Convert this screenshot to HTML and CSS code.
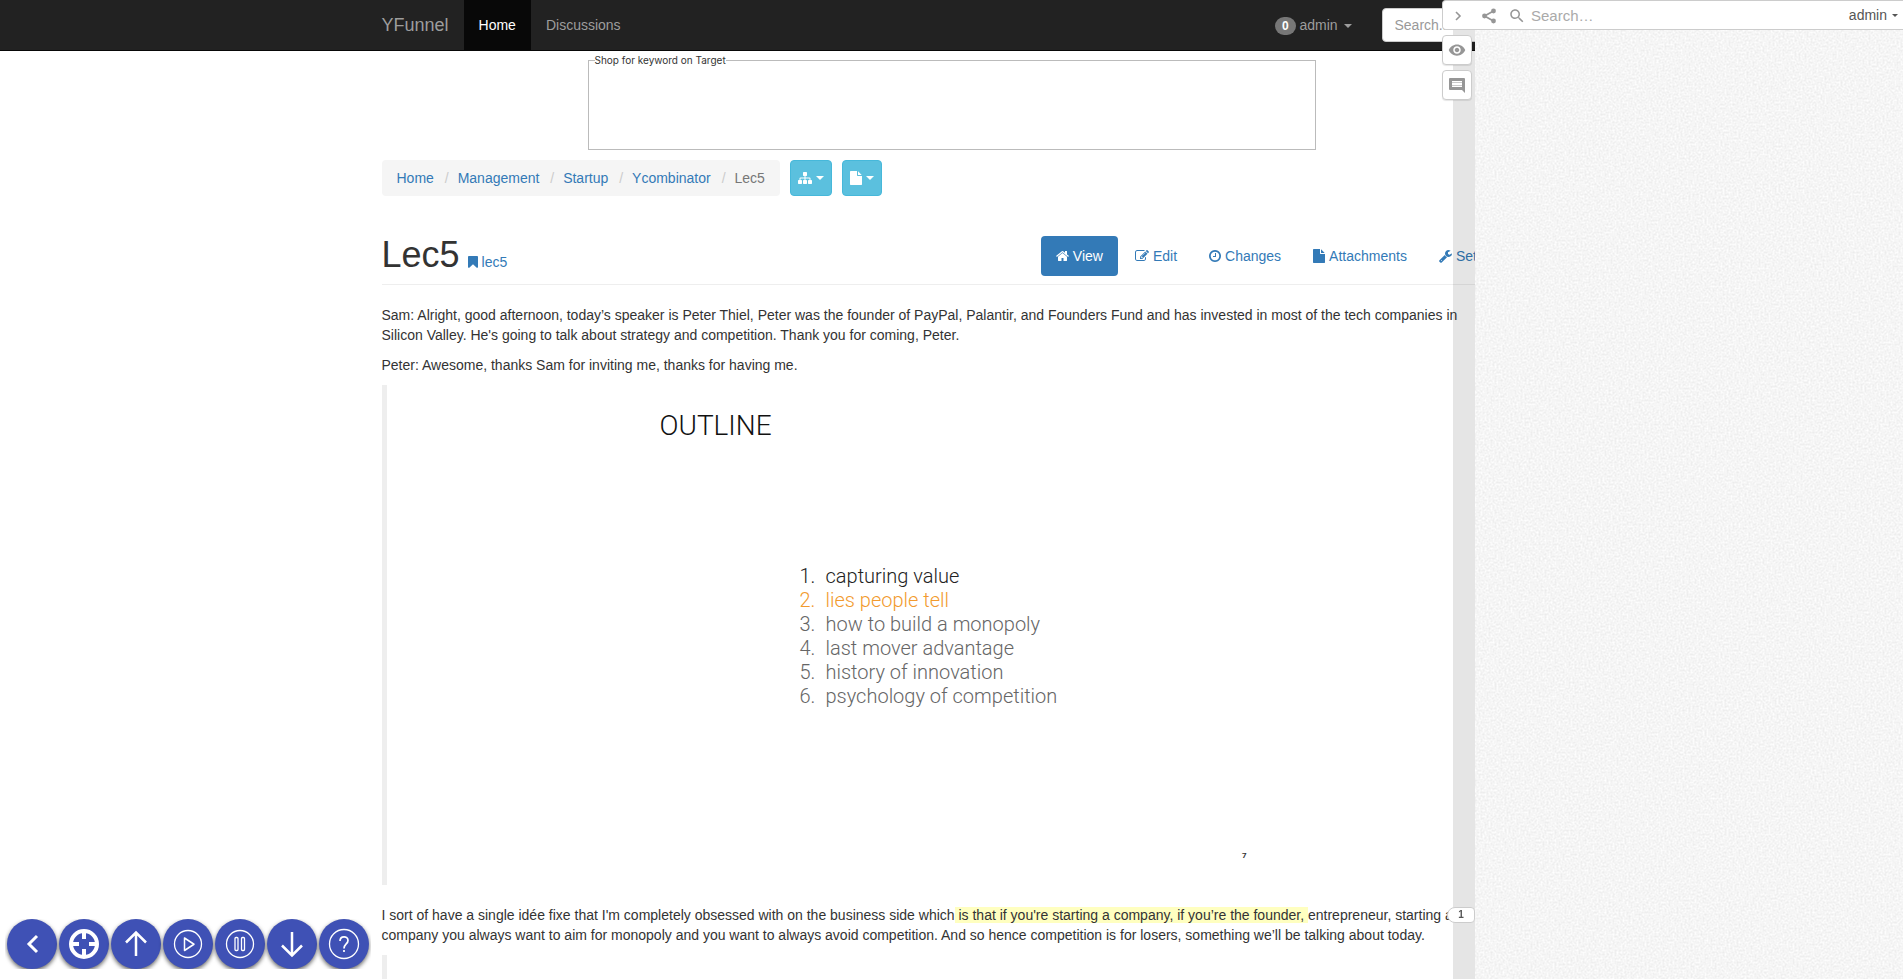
FILE: index.html
```html
<!DOCTYPE html>
<html lang="en">
<head>
<meta charset="utf-8">
<title>Lec5 - YFunnel</title>
<link rel="stylesheet" href="styles.css">
</head>
<body>
<header class="navbar">
  <div class="container navbar-inner">
    <a class="brand" href="#">YFunnel</a>
    <nav class="navbar-links">
      <a class="nav-link active" href="#">Home</a>
      <a class="nav-link" href="#">Discussions</a>
    </nav>
    <a class="nav-link user-link" href="#"><span class="badge">0</span> admin <span class="caret"></span></a>
    <input class="nav-search" type="text" placeholder="Search..." aria-label="Search wiki">
  </div>
</header>

<main class="container">
  <fieldset class="shop"><legend>Shop for keyword on Target</legend></fieldset>

  <div class="crumb-row">
    <ol class="breadcrumb">
      <li><a href="#">Home</a></li>
      <li><a href="#">Management</a></li>
      <li><a href="#">Startup</a></li>
      <li><a href="#">Ycombinator</a></li>
      <li class="current">Lec5</li>
    </ol>
    <button class="btn-info" type="button" aria-label="Site tree">
      <svg width="14" height="14" viewBox="0 0 1792 1792"><path d="M1792 1248v320q0 40-28 68t-68 28h-320q-40 0-68-28t-28-68v-320q0-40 28-68t68-28h96v-192h-512v192h96q40 0 68 28t28 68v320q0 40-28 68t-68 28h-320q-40 0-68-28t-28-68v-320q0-40 28-68t68-28h96v-192h-512v192h96q40 0 68 28t28 68v320q0 40-28 68t-68 28h-320q-40 0-68-28t-28-68v-320q0-40 28-68t68-28h96v-192q0-52 38-90t90-38h512v-192h-96q-40 0-68-28t-28-68v-320q0-40 28-68t68-28h320q40 0 68 28t28 68v320q0 40-28 68t-68 28h-96v192h512q52 0 90 38t38 90v192h96q40 0 68 28t28 68z"/></svg>
      <span class="caret"></span>
    </button>
    <button class="btn-info" type="button" aria-label="New page">
      <svg width="12" height="14" viewBox="128 0 1536 1792"><path d="M1152 512v-472q22 14 36 28l408 408q14 14 28 36h-472zm-128 32q0 40 28 68t68 28h544v1056q0 40-28 68t-68 28h-1344q-40 0-68-28t-28-68v-1600q0-40 28-68t68-28h800v544z"/></svg>
      <span class="caret"></span>
    </button>
  </div>

  <div class="page-header">
    <h1>Lec5</h1>
    <a class="slug" href="#"><svg width="10" height="14" viewBox="256 0 1280 1792"><path d="M1420 128q23 0 44 9 33 13 52.5 41t19.5 62v1289q0 34-19.5 62t-52.5 41q-19 8-44 8-48 0-83-32l-441-424-441 424q-36 33-83 33-23 0-44-9-33-13-52.5-41t-19.5-62v-1289q0-34 19.5-62t52.5-41q21-9 44-9h1048z"/></svg>lec5</a>
    <nav class="pills">
      <a class="pill active" href="#"><svg width="13" height="14" viewBox="64 0 1664 1792"><path d="M1472 992v480q0 26-19 45t-45 19h-384v-384h-256v384h-384q-26 0-45-19t-19-45v-480q0-1 .5-3t.5-3l575-474 575 474q1 2 1 6zm223-69l-62 74q-8 9-21 11h-3q-13 0-21-7l-692-577-692 577q-12 8-24 7-13-2-21-11l-62-74q-8-10-7-23.5t11-21.5l719-599q32-26 76-26t76 26l244 204v-195q0-14 9-23t23-9h192q14 0 23 9t9 23v408l219 182q10 8 11 21.5t-7 23.5z"/></svg>View</a>
      <a class="pill" href="#"><svg width="14" height="14" viewBox="0 0 1792 1792"><path d="M888 1184l116-116-152-152-116 116v56h96v96h56zm440-720q-16-16-33 1l-350 350q-17 17-1 33t33-1l350-350q17-17 1-33zm80 594v190q0 119-84.5 203.5t-203.5 84.5h-832q-119 0-203.5-84.5t-84.5-203.5v-832q0-119 84.5-203.5t203.5-84.5h832q63 0 117 25 15 7 18 23 3 17-9 29l-49 49q-14 14-32 8-23-6-45-6h-832q-66 0-113 47t-47 113v832q0 66 47 113t113 47h832q66 0 113-47t47-113v-126q0-13 9-22l64-64q15-15 35-7t20 29zm-96-738l288 288-672 672h-288v-288zm444 132l-92 92-288-288 92-92q28-28 68-28t68 28l152 152q28 28 28 68t-28 68z"/></svg>Edit</a>
      <a class="pill" href="#"><svg width="12" height="14" viewBox="128 0 1536 1792"><path d="M1024 544v448q0 14-9 23t-23 9h-320q-14 0-23-9t-9-23v-64q0-14 9-23t23-9h224v-352q0-14 9-23t23-9h64q14 0 23 9t9 23zm416 352q0-148-73-273t-198-198-273-73-273 73-198 198-73 273 73 273 198 198 273 73 273-73 198-198 73-273zm224 0q0 209-103 385.5t-279.5 279.5-385.5 103-385.5-103-279.5-279.5-103-385.5 103-385.5 279.5-279.5 385.5-103 385.5 103 279.5 279.5 103 385.5z"/></svg>Changes</a>
      <a class="pill" href="#"><svg width="12" height="14" viewBox="128 0 1536 1792"><path d="M1152 512v-472q22 14 36 28l408 408q14 14 28 36h-472zm-128 32q0 40 28 68t68 28h544v1056q0 40-28 68t-68 28h-1344q-40 0-68-28t-28-68v-1600q0-40 28-68t68-28h800v544z"/></svg>Attachments</a>
      <a class="pill" href="#"><svg width="13" height="14" viewBox="64 0 1664 1792"><path d="M448 1472q0-26-19-45t-45-19-45 19-19 45 19 45 45 19 45-19 19-45zm644-420l-682 682q-37 37-90 37-52 0-91-37l-106-108q-38-36-38-90 0-53 38-91l681-681q39 98 114.5 173.5t173.5 114.5zm634-435q0 39-23 106-47 134-164.5 217.5t-258.5 83.5q-185 0-316.5-131.5t-131.5-316.5 131.5-316.5 316.5-131.5q58 0 121.5 16.5t107.5 46.5q16 11 16 28t-16 28l-293 169v224l193 107q5-3 79-48.5t135.5-81 70.5-35.5q15 0 23.5 10t8.5 25z"/></svg>Settings</a>
    </nav>
  </div>

  <article class="article">
    <p>Sam: Alright, good afternoon, today’s speaker is Peter Thiel, Peter was the founder of PayPal, Palantir, and Founders Fund and has invested in most of the tech companies in<br>Silicon Valley. He's going to talk about strategy and competition. Thank you for coming, Peter.</p>
    <p>Peter: Awesome, thanks Sam for inviting me, thanks for having me.</p>
    <blockquote class="slide">
      <h2>OUTLINE</h2>
      <ol class="outline">
        <li class="done">capturing value</li>
        <li class="now">lies people tell</li>
        <li>how to build a monopoly</li>
        <li>last mover advantage</li>
        <li>history of innovation</li>
        <li>psychology of competition</li>
      </ol>
      <div class="slide-number">7</div>
    </blockquote>
    <p>I sort of have a single idée fixe that I'm completely obsessed with on the business side which<mark> is that if you're starting a company, if you’re the founder, </mark>entrepreneur, starting a<br>company you always want to aim for monopoly and you want to always avoid competition. And so hence competition is for losers, something we’ll be talking about today.</p>
    <blockquote class="next-slide"></blockquote>
  </article>
</main>

<div class="player">
  <button type="button" aria-label="Collapse"><svg viewBox="0 0 50 50"><path d="M30 17l-8 8 8 8" stroke-width="3"/></svg></button>
  <button type="button" aria-label="Locate"><svg viewBox="0 0 50 50"><circle cx="25" cy="25" r="13" stroke-width="4"/><path d="M25 12v8M25 30v8M12 25h8M30 25h8" stroke-width="4"/></svg></button>
  <button type="button" aria-label="Previous"><svg viewBox="0 0 50 50"><path d="M25 37V14M15 23.500l10-10 10 10" stroke-width="2.500"/></svg></button>
  <button type="button" aria-label="Play"><svg viewBox="0 0 50 50"><circle cx="25" cy="25" r="13.500" stroke-width="1.300"/><path d="M21.500 19v12.500l9.500-6.250z" stroke-width="1.500" stroke-linejoin="round"/></svg></button>
  <button type="button" aria-label="Pause"><svg viewBox="0 0 50 50"><circle cx="25" cy="25" r="13.500" stroke-width="1.300"/><rect x="20" y="18.500" width="3" height="13" rx="1" stroke-width="1.300"/><rect x="26.500" y="18.500" width="3" height="13" rx="1" stroke-width="1.300"/></svg></button>
  <button type="button" aria-label="Next"><svg viewBox="0 0 50 50"><path d="M25 13v23M15 26.500l10 10 10-10" stroke-width="2.500"/></svg></button>
  <button type="button" aria-label="Help"><svg viewBox="0 0 50 50"><circle cx="25" cy="25" r="14.500" stroke-width="1.300"/><path d="M21 22c0-5.500 8-5.500 8-.500 0 3.500-4 3.500-4 8M25 31v2" stroke-width="1.700"/></svg></button>
</div>

<aside class="annotator">
  <div class="bucket-bar"></div>
  <svg class="paper" aria-hidden="true"><filter id="grain" x="0" y="0" width="100%" height="100%" color-interpolation-filters="sRGB"><feTurbulence type="fractalNoise" baseFrequency="0.5" numOctaves="3" seed="4"/><feColorMatrix values="0.12 0 0 0 0.902  0.12 0 0 0 0.902  0.12 0 0 0 0.902  0 0 0 0 1"/></filter><rect width="100%" height="100%" filter="url(#grain)"/></svg>
  <div class="topbar">
    <button class="icon-button toggle" type="button" aria-label="Close sidebar"><svg width="8" height="10" viewBox="0 0 8 10"><path d="M2 1l4 4-4 4" fill="none" stroke="#969696" stroke-width="1.600"/></svg></button>
    <button class="icon-button" type="button" aria-label="Share"><svg width="16" height="16" viewBox="0 0 16 16"><path d="M12.500 3L3.500 8l9 5" fill="none" stroke="#969696" stroke-width="1.700"/><circle cx="12.500" cy="3" r="2.400"/><circle cx="3.500" cy="8" r="2.400"/><circle cx="12.500" cy="13" r="2.400"/></svg></button>
    <label class="find"><svg width="18" height="18" viewBox="0 0 24 24"><path d="M15.500 14h-.790l-.280-.270C15.410 12.590 16 11.110 16 9.500 16 5.910 13.090 3 9.500 3S3 5.910 3 9.500 5.910 16 9.500 16c1.610 0 3.090-.590 4.230-1.570l.270.280v.790l5 4.990L20.490 19l-4.990-5zm-6 0C7.010 14 5 11.990 5 9.500S7.010 5 9.500 5 14 7.010 14 9.500 11.990 14 9.500 14z"/></svg><input type="text" placeholder="Search…" aria-label="Search annotations"></label>
    <button class="account" type="button">admin <span class="caret small"></span></button>
  </div>
  <div class="side-buttons">
    <button type="button" aria-label="Toggle highlights"><svg width="18" height="18" viewBox="0 0 24 24"><path d="M12 4.500C7 4.500 2.730 7.610 1 12c1.730 4.390 6 7.500 11 7.500s9.270-3.110 11-7.500c-1.730-4.390-6-7.500-11-7.500zM12 17c-2.760 0-5-2.240-5-5s2.240-5 5-5 5 2.240 5 5-2.240 5-5 5zm0-8c-1.660 0-3 1.340-3 3s1.340 3 3 3 3-1.340 3-3-1.340-3-3-3z"/></svg></button>
    <button type="button" aria-label="New note"><svg width="16" height="16" viewBox="0 0 16 16"><path fill-rule="evenodd" d="M1 1h14q1 0 1 1v14l-3-3H1q-1 0-1-1V2q0-1 1-1zM3 4v6h10V4z"/><path d="M3 5h10v1H3zM3 8h10v1H3z" opacity=".5"/></svg></button>
  </div>
  <button class="bucket" type="button">1</button>
</aside>
</body>
</html>
```
FILE: styles.css
```css
* { box-sizing: border-box; }

body {
  margin: 0;
  height: 100vh;
  overflow: hidden;
  background: #fff;
  color: #333;
  font: 14px/20px "Liberation Sans", Arial, sans-serif;
}

a { color: #337ab7; text-decoration: none; }
button, input { font: inherit; margin: 0; }
button { cursor: pointer; }
svg { fill: currentColor; flex: none; }

.container { max-width: 1140px; margin: 0 auto; }

.caret {
  display: inline-block;
  border: 4px solid transparent;
  border-top-color: currentColor;
  border-bottom: 0;
  vertical-align: middle;
}
.caret.small { border-width: 3px 3px 0; }

/* Navigation bar */
.navbar { background: #222; border-bottom: 1px solid #080808; }
.navbar-inner { display: flex; height: 50px; align-items: center; }
.brand { color: #9d9d9d; font-size: 18px; padding-right: 15px; }
.navbar-links { display: flex; flex: 1; }
.nav-link { color: #9d9d9d; padding: 15px; }
.nav-link.active { background: #080808; color: #fff; }
.user-link .caret { margin-left: 2px; }
.badge {
  display: inline-block;
  min-width: 10px;
  padding: 3px 7px;
  border-radius: 10px;
  background: #777;
  color: #fff;
  font-size: 12px;
  font-weight: bold;
  line-height: 12px;
}
.nav-search {
  width: 140px;
  height: 34px;
  margin-left: 15px;
  padding: 6px 12px;
  border: 1px solid #ccc;
  border-radius: 4px;
  background: #fff;
}
.nav-search::placeholder { color: #999; }

/* Shop box */
.shop {
  width: 728px;
  height: 96px;
  margin: 3px auto 10px;
  padding: 0 6px;
  border: 1px solid #bbb;
}
.shop legend {
  padding: 0;
  font-family: Inter, "Liberation Sans", sans-serif;
  font-size: 10px;
  line-height: 12px;
}

/* Breadcrumb */
.crumb-row { display: flex; gap: 10px; }
.breadcrumb {
  display: flex;
  gap: 6px;
  margin: 0;
  padding: 8px 15px;
  border-radius: 4px;
  background: #f5f5f5;
  list-style: none;
}
.breadcrumb li + li::before { content: "/\00a0"; padding: 0 5px; color: #ccc; }
.breadcrumb .current { color: #777; }
.btn-info {
  display: flex;
  align-items: center;
  gap: 4px;
  padding: 6px 7px;
  border: 1px solid #46b8da;
  border-radius: 4px;
  background: #5bc0de;
  color: #fff;
}

/* Page header */
.page-header {
  display: flex;
  align-items: flex-start;
  margin: 40px 0 20px;
  padding-bottom: 8px;
  border-bottom: 1px solid #eee;
}
h1 { margin: 0; font-size: 36px; font-weight: 500; line-height: 38px; }
.slug { display: flex; align-items: center; gap: 4px; margin: 16px 0 0 8px; }
.pills { display: flex; gap: 2px; margin-left: auto; }
.pill { display: flex; align-items: center; gap: 4px; padding: 10px 15px; border-radius: 4px; }
.pill.active { background: #337ab7; color: #fff; }

/* Article */
.article p { margin: 0 0 10px; white-space: nowrap; }
mark { background: #ffffc0; color: inherit; }
blockquote { margin: 0 0 20px; border-left: 5px solid #eee; }
.next-slide { height: 24px; margin-bottom: 0; }
.slide {
  padding: 25px 220px 22px 273px;
  font-family: Roboto, "Open Sans", sans-serif;
}
.slide h2 { margin: 0; color: #111; font-size: 28px; font-weight: 300; line-height: 32px; }
.outline {
  margin: 122px 0 141px 140px;
  padding: 0;
  color: #666;
  font-size: 20px;
  font-weight: 300;
  line-height: 24px;
  list-style: none;
  counter-reset: item;
}
.outline li { display: flex; counter-increment: item; }
.outline li::before { content: counter(item) "."; width: 26px; }
.outline .done { color: #222; }
.outline .now { color: #f29a2e; }
.slide-number {
  padding-right: 55px;
  text-align: right;
  font-size: 8px;
  font-weight: bold;
  line-height: 14px;
}

/* Floating player controls */
.player {
  position: fixed;
  left: 5px;
  bottom: 10px;
  display: flex;
  gap: 2px;
  padding: 0 2px;
  overflow: hidden;
}
.player button {
  width: 50px;
  height: 50px;
  padding: 0;
  border: 0;
  border-radius: 50%;
  background: #3f51b5;
  color: #fff;
  box-shadow: 0 2px 4px rgba(0, 0, 0, 0.6);
}
.player svg { display: block; width: 50px; height: 50px; fill: none; stroke: currentColor; }

/* Annotation sidebar */
.annotator { position: fixed; top: 0; right: 0; bottom: 0; width: 428px; color: #969696; }
.paper { position: absolute; inset: 0; width: 100%; height: 100%; }
.bucket-bar {
  position: absolute;
  top: 0;
  bottom: 0;
  right: 100%;
  width: 22px;
  background: rgba(0, 0, 0, 0.1);
}
.topbar {
  position: absolute;
  top: 0;
  left: -33px;
  right: 0;
  display: flex;
  align-items: center;
  height: 30px;
  padding-top: 2px;
  border: 1px solid #ccc;
  border-right: 0;
  border-radius: 4px 0 0 4px;
  background: #fff;
}
.icon-button { display: flex; padding: 0; border: 0; background: none; color: inherit; }
.toggle { margin: 0 19px 0 11px; }
.find { display: flex; flex: 1; align-items: center; gap: 5px; margin: 0 11px; }
.find input { flex: 1; min-width: 0; padding: 0; border: 0; outline: 0; font-size: 15px; }
.find input::placeholder { color: #aaa; }
.account {
  display: flex;
  align-items: center;
  gap: 5px;
  padding: 0 5px 2px 0;
  border: 0;
  background: none;
  color: #555;
}
.side-buttons {
  position: absolute;
  top: 35px;
  left: -33px;
  display: grid;
  gap: 5px;
}
.side-buttons button {
  display: grid;
  place-items: center;
  width: 30px;
  height: 30px;
  padding: 0;
  border: 1px solid #ccc;
  border-radius: 4px;
  background: #fff;
  color: #969696;
  box-shadow: 0 1px 1px rgba(0, 0, 0, 0.1);
}
.bucket {
  position: absolute;
  top: 907px;
  left: -28px;
  width: 28px;
  height: 16px;
  padding: 0;
  border: 1px solid #ccc;
  border-radius: 8px 4px 4px 8px;
  background: #fff;
  color: #555;
  font-size: 10px;
  font-weight: bold;
  line-height: 14px;
}
```
